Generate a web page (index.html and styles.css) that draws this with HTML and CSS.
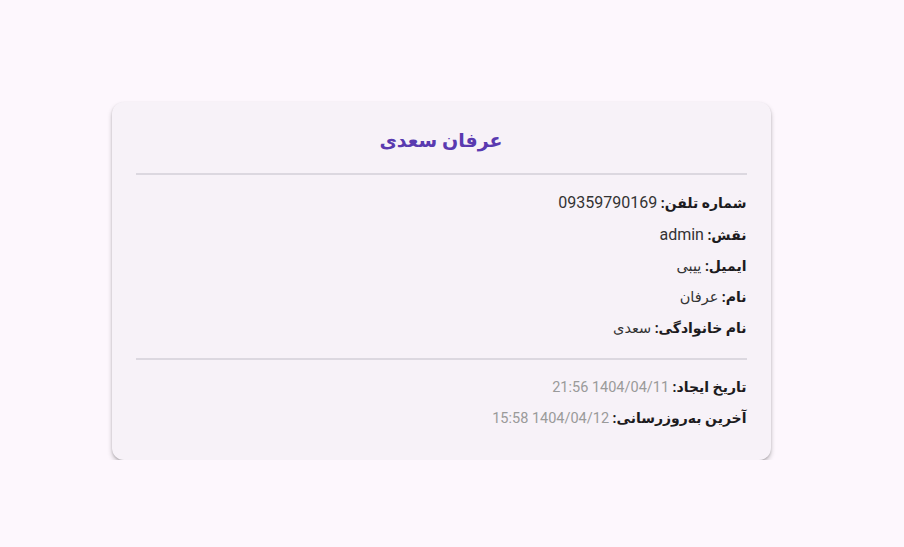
FILE: index.html
```html
<!DOCTYPE html>
<html lang="fa" dir="rtl">
<head>
<meta charset="utf-8">
<link rel="stylesheet" href="styles.css">
</head>
<body>
<div class="page">
  <div class="card">
    <h2 class="title">عرفان سعدی</h2>
    <hr class="divider">
    <div class="rows">
      <div class="row"><span class="label">شماره تلفن:</span> <span class="value num">09359790169</span></div>
      <div class="row"><span class="label">نقش:</span> <span class="value num">admin</span></div>
      <div class="row"><span class="label">ایمیل:</span> <span class="value fa">ییبی</span></div>
      <div class="row"><span class="label">نام:</span> <span class="value fa">عرفان</span></div>
      <div class="row"><span class="label">نام خانوادگی:</span> <span class="value fa">سعدی</span></div>
    </div>
    <hr class="divider second">
    <div class="rows meta">
      <div class="row"><span class="label">تاریخ ایجاد:</span> <span class="value muted">1404/04/11 21:56</span></div>
      <div class="row"><span class="label">آخرین به‌روزرسانی:</span> <span class="value muted">1404/04/12 15:58</span></div>
    </div>
  </div>
</div>
</body>
</html>
```
FILE: styles.css
```css
html, body {
  margin: 0;
  padding: 0;
  background: #fdf7fd;
  font-family: Roboto, "DejaVu Sans", sans-serif;
  color: #1d1b20;
}
.page {
  display: flex;
  justify-content: center;
  padding-top: 102px;
  padding-right: 22px;
}
.card {
  width: 611px;
  background: #f7f2f8;
  border-radius: 12px;
  box-shadow: 0 3px 5px rgba(0,0,0,0.22), 0 1px 2px rgba(0,0,0,0.15);
  padding: 21px 24px 26px;
}
.title {
  margin: 0;
  text-align: center;
  color: #5a3ab0;
  font-size: 19px;
  font-weight: bold;
  line-height: 36px;
}
.divider {
  border: none;
  border-top: 2px solid #dcd8e0;
  margin: 14px 0 12px;
}
.divider.second {
  margin: 14px 0 12px;
}
.rows {
  display: flex;
  flex-direction: column;
}
.row {
  font-size: 14px;
  line-height: 31px;
  text-align: right;
}
.label {
  font-weight: bold;
  font-size: 14px;
}
.value {
  color: #333;
}
.num {
  font-size: 16px;
}
.fa {
  font-size: 14.5px;
}
.muted {
  color: #9a9a9a;
  font-size: 14.5px;
}
```
